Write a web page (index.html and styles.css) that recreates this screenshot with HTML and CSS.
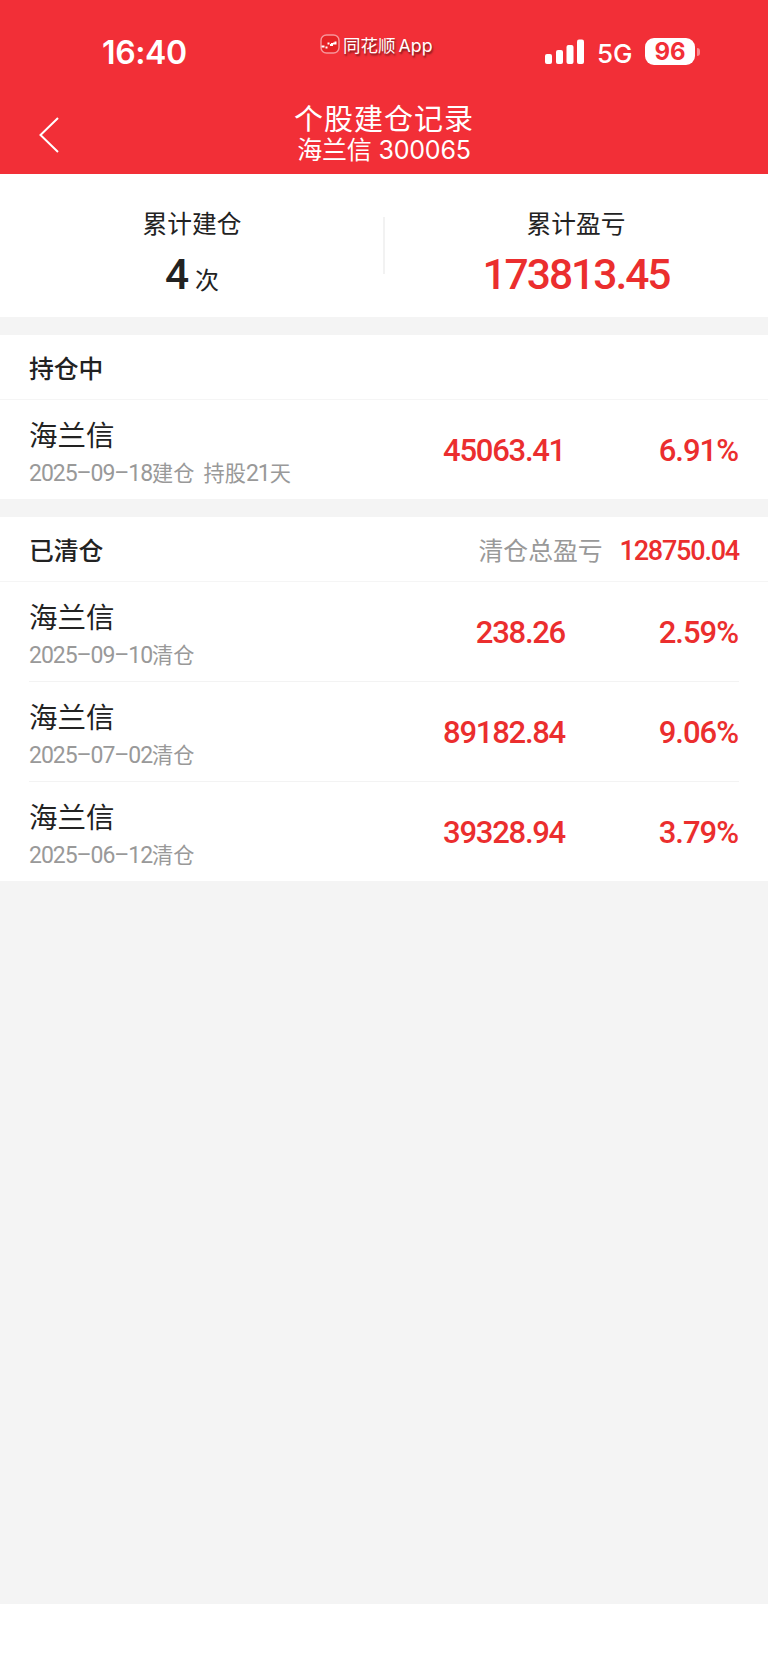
FILE: index.html
```
<!DOCTYPE html>
<html lang="zh-CN">

<head>
    <meta charset="UTF-8">
    <meta name="viewport" content="width=device-width, initial-scale=1.0">
    <title>个股建仓记录</title>
    <link rel="stylesheet" href="styles.css">
</head>

<body>
    <header class="header">
        <div class="status-bar">
            <div class="time">16:40</div>
            <div class="app-name">
                <svg width="20" height="20" viewBox="0 0 20 20">
                    <rect x="1" y="1" width="18" height="18" rx="5.5" fill="#e62226" stroke="#f7959a" stroke-width="1.4" />
                    <path d="M1.500 12.500h3M5.500 13.500h2M7.500 9.500h2M10 11h2v-2M13 9.500h1.500M15.500 7.500v3" fill="none" stroke="#fff" stroke-width="2" />
                </svg>
                <span>同花顺<span class="latin">App</span></span>
            </div>
            <div class="status-right">
                <svg class="signal" width="40" height="26" viewBox="0 0 40 26" fill="#fff">
                    <rect x="0" y="15" width="7" height="10" rx="2" />
                    <rect x="11" y="11" width="7" height="14" rx="2" />
                    <rect x="21.500" y="6" width="7" height="19" rx="2" />
                    <rect x="32" y="0.500" width="7" height="24.500" rx="2" />
                </svg>
                <span class="network">5G</span>
                <span class="battery">96</span>
                <span class="battery-cap"></span>
            </div>
        </div>
        <div class="nav">
            <svg class="back" width="22" height="38" viewBox="0 0 22 38">
                <path d="M20 2L2.500 19L20 36" fill="none" stroke="#fff" stroke-width="2" />
            </svg>
            <div class="nav-title">
                <h1>个股建仓记录</h1>
                <p>海兰信 300065</p>
            </div>
        </div>
    </header>

    <section class="summary">
        <div class="summary-item">
            <div class="label">累计建仓</div>
            <div class="value"><b>4</b><span class="unit">次</span></div>
        </div>
        <div class="summary-item">
            <div class="label">累计盈亏</div>
            <div class="value red"><b>173813.45</b></div>
        </div>
    </section>

    <section class="card">
        <div class="card-head">
            <h2>持仓中</h2>
        </div>
        <div class="row">
            <div class="stock">
                <div class="name">海兰信</div>
                <div class="date">2025–09–18<span>建仓</span><span class="days">持股</span>21<span>天</span></div>
            </div>
            <div class="amount">45063.41</div>
            <div class="percent">6.91%</div>
        </div>
    </section>

    <section class="card">
        <div class="card-head">
            <h2>已清仓</h2>
            <div class="total"><span>清仓总盈亏</span><b>128750.04</b></div>
        </div>
        <div class="row">
            <div class="stock">
                <div class="name">海兰信</div>
                <div class="date">2025–09–10<span>清仓</span></div>
            </div>
            <div class="amount">238.26</div>
            <div class="percent">2.59%</div>
        </div>
        <div class="row">
            <div class="stock">
                <div class="name">海兰信</div>
                <div class="date">2025–07–02<span>清仓</span></div>
            </div>
            <div class="amount">89182.84</div>
            <div class="percent">9.06%</div>
        </div>
        <div class="row">
            <div class="stock">
                <div class="name">海兰信</div>
                <div class="date">2025–06–12<span>清仓</span></div>
            </div>
            <div class="amount">39328.94</div>
            <div class="percent">3.79%</div>
        </div>
    </section>

    <footer class="bottom"></footer>
</body>

</html>
```
FILE: styles.css
```
* {
    box-sizing: border-box;
    margin: 0;
    padding: 0;
}

body {
    display: flex;
    flex-direction: column;
    height: 1665px;
    background-color: #f4f4f4;
    color: #222;
    font-family: "Noto Sans CJK SC", sans-serif;
}

.header {
    height: 174px;
    background-color: #f22f37;
    color: #fff;
}

.status-bar {
    display: grid;
    grid-template-columns: 320px 1fr 224px;
    height: 96px;
}

.time {
    padding: 33px 0 0 102px;
    font: 600 32px/40px Inter, sans-serif;
    letter-spacing: -0.4px;
}

.app-name {
    display: flex;
    align-items: center;
    gap: 3px;
    height: 24px;
    margin-top: 32px;
    font-size: 17.5px;
    text-shadow: 1px 2px 2px rgba(0, 0, 0, 0.5);
    white-space: nowrap;
}

.app-name .latin {
    margin-left: 3px;
    font-family: Inter, sans-serif;
    font-size: 17.8px;
}

.status-right {
    display: flex;
    align-items: center;
    height: 27px;
    margin-top: 38px;
    font-family: Inter, sans-serif;
}

.signal {
    margin-left: 1px;
}

.network {
    width: 48px;
    margin-left: 12px;
    font-size: 26px;
    font-weight: 500;
    padding-top: 3px;
}

.battery {
    width: 50px;
    height: 27px;
    border-radius: 9px;
    background-color: #fff;
    color: #f22f37;
    font-size: 24px;
    font-weight: 700;
    line-height: 28px;
    text-align: center;
}

.battery-cap {
    width: 3px;
    height: 8px;
    margin-left: 2px;
    border-radius: 0 3px 3px 0;
    background-color: #f88c91;
}

.nav {
    display: grid;
    grid-template-columns: 140px 1fr 140px;
    height: 78px;
}

.back {
    margin: 20px 0 0 38px;
}

.nav-title {
    padding-top: 1px;
    text-align: center;
}

.nav-title h1 {
    font-size: 29px;
    font-weight: 400;
    line-height: 40px;
    letter-spacing: 1px;
}

.nav-title p {
    font: 25px/26px Inter, "Noto Sans CJK SC", sans-serif;
    letter-spacing: -0.2px;
}

.summary {
    display: flex;
    height: 143px;
    background-color: #fff;
}

.summary-item {
    position: relative;
    flex: 1;
    padding-top: 30px;
    text-align: center;
}

.summary-item + .summary-item::before {
    content: "";
    position: absolute;
    left: -1px;
    top: 43px;
    width: 2px;
    height: 57px;
    background-color: #f2f2f2;
}

.label {
    font-size: 24.7px;
    line-height: 37px;
}

.value {
    height: 64px;
    line-height: 68px;
}

.value b {
    font-family: Roboto, sans-serif;
    font-size: 42.5px;
    font-weight: 500;
    letter-spacing: -2px;
}

.unit {
    margin-left: 8px;
    font-size: 24px;
}

.red {
    color: #eb2e2e;
}

.card {
    margin-top: 18px;
    background-color: #fff;
}

.card-head {
    display: flex;
    justify-content: space-between;
    align-items: center;
    height: 65px;
    padding: 0 29px;
    border-bottom: 1px solid #f5f5f5;
}

.card-head h2 {
    font-size: 24.8px;
    font-weight: 500;
}

.total {
    display: flex;
    align-items: center;
    color: #999;
    font-size: 24.8px;
}

.total b {
    margin: 3px 0 0 17px;
    color: #eb2e2e;
    font: 500 27px Roboto, sans-serif;
    letter-spacing: -1.2px;
}

.row {
    display: grid;
    grid-template-columns: 1fr 260px 173px;
    align-items: center;
    height: 99px;
    margin: 0 29px;
}

.row + .row {
    height: 100px;
    border-top: 1px solid #f3f3f3;
}

.stock {
    padding-top: 7px;
}

.name {
    font-size: 28.5px;
    line-height: 39px;
}

.date {
    color: #999;
    font: 23px/38px Roboto, sans-serif;
    letter-spacing: -1.05px;
    white-space: nowrap;
}

.date span {
    font-family: "Noto Sans CJK SC", sans-serif;
    font-size: 21.2px;
    letter-spacing: 0;
}

.date .days {
    margin-left: 9px;
}

.amount,
.percent {
    padding: 2px 1px 0 0;
    color: #eb2e2e;
    font: 500 31px Roboto, sans-serif;
    letter-spacing: -1.25px;
    text-align: right;
}

.percent {
    letter-spacing: -1px;
}

.bottom {
    height: 61px;
    margin-top: auto;
    background-color: #fff;
}
```
